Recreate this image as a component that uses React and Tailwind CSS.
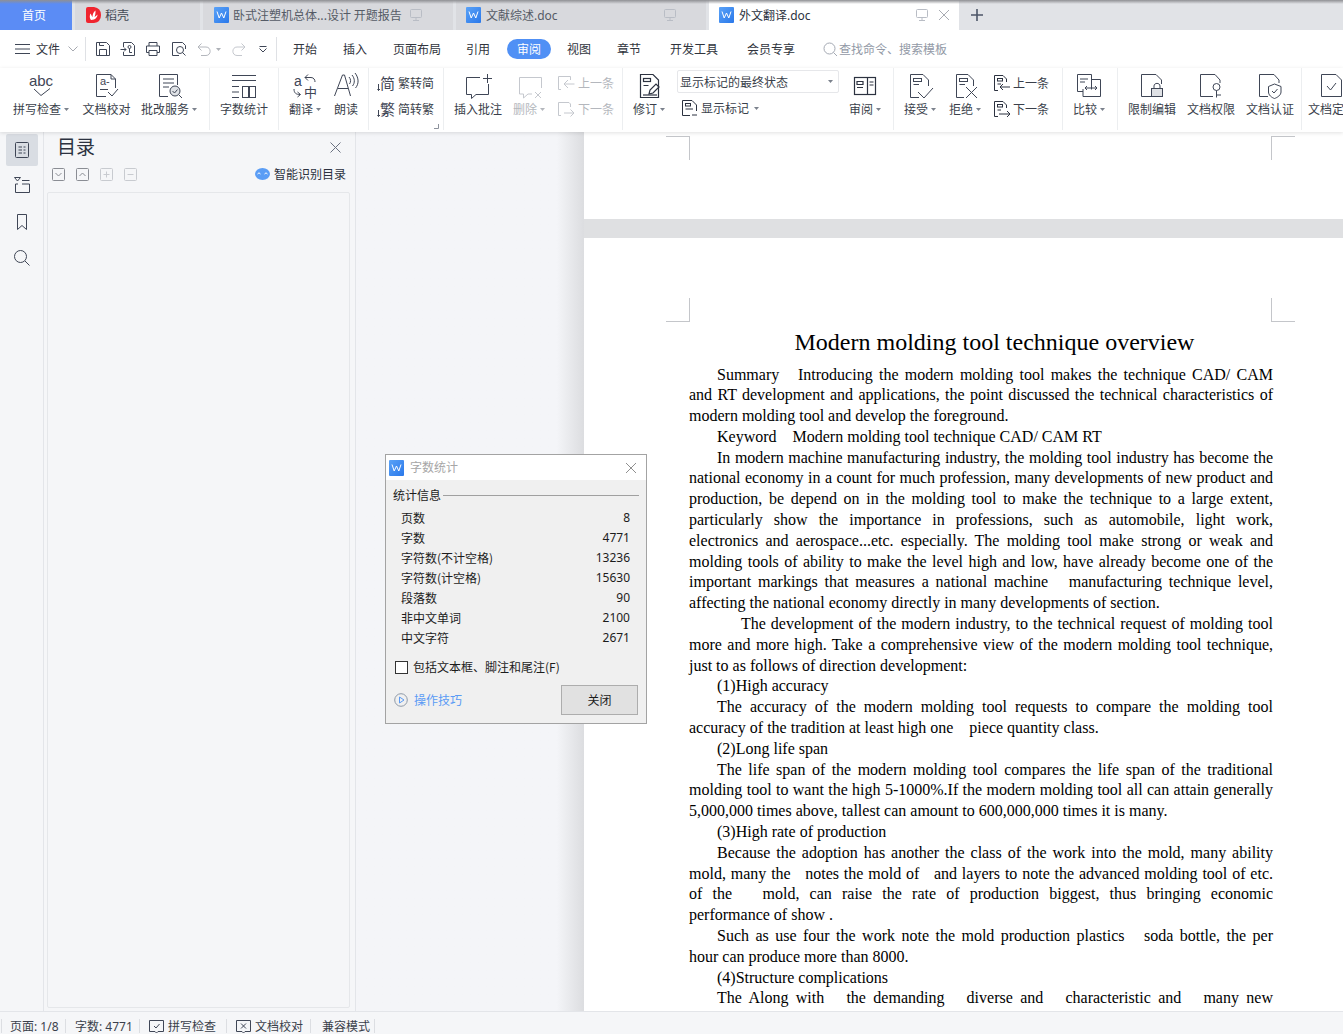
import React from "react";

const LATIN = "font-['Noto_Sans','Liberation_Sans',sans-serif]";

const S = ({ w = 28, h = 28, className = "", children, stroke = "#3f4656", sw = 1 }) => (
  <svg width={w} height={h} viewBox={`0 0 ${w} ${h}`} fill="none" stroke={stroke} strokeWidth={sw} className={"shrink-0 " + className}>
    {children}
  </svg>
);

const WIcon = () => (
  <svg width="15" height="16" viewBox="0 0 15 16" className="shrink-0">
    <defs>
      <linearGradient id="wg" x1="0" y1="0" x2="1" y2="1">
        <stop offset="0" stopColor="#5aa2f7" />
        <stop offset="1" stopColor="#2a78ea" />
      </linearGradient>
    </defs>
    <rect x="0" y="0" width="15" height="16" rx="1" fill="url(#wg)" />
    <path d="M3 4.5 L5.2 11 L7.5 6 L9.8 11 L12 4.5" fill="none" stroke="#fff" strokeWidth="1" />
  </svg>
);

const Screen = ({ c = "#b9bdc5" }) => (
  <S w={14} h={14} stroke={c}>
    <rect x="1.5" y="1.5" width="11" height="8" rx="1" />
    <path d="M7 9.5V12.5M4 12.5H10" />
  </S>
);

const Caret = ({ c = "#7b818c" }) => (
  <svg width="5" height="3" viewBox="0 0 5 3" className="shrink-0 ml-[3px]"><path d="M0 0H5L2.5 3Z" fill={c} /></svg>
);

const Tab = ({ w, active, children, icon, extra }) => (
  <div className={`${w} h-[30px] flex items-center shrink-0 ${active ? "bg-white" : "bg-[#d8d9dd]"}`}>
    {icon}
    {children}
    {extra}
  </div>
);

const G = ({ x, y, size, children, anchor = "start", family = "'Liberation Sans',sans-serif" }) => (
  <text x={x} y={y} textAnchor={anchor} fontSize={size} fontFamily={family} fill="#3f4656" stroke="none">{children}</text>
);
const CJK = "'Noto Sans CJK SC',sans-serif";

const Icons = {
  spell: (
    <S>
      <G x="14" y="14" anchor="middle" size="15">abc</G>
      <path d="M7 17L14 23.5L23 16.5" />
    </S>
  ),
  proof: (
    <S>
      <path d="M13 24.5H3.5V2.5H18L22.5 7V16" />
      <path d="M18 2.5V7H22.5" />
      <G x="7" y="13" size="11">a-</G>
      <path d="M7 17.5H15M15 20L19 24L25 17" />
    </S>
  ),
  mark: (
    <S>
      <path d="M13 24.5H4.5V2.5H22.5V13" />
      <path d="M8 7H19M8 11H19M8 15H14" />
      <circle cx="20" cy="19" r="5" fill="#dfe2e6" />
      <path d="M17.5 19L19.5 21L22.5 17.5M24 23L27 26" />
    </S>
  ),
  count: (
    <S w={30}>
      <path d="M3 3.5H27M3 8.5H27M3 14.5H10M3 20H10M3 25.5H10" />
      <rect x="13.5" y="14.5" width="6" height="11" />
      <rect x="20.5" y="14.5" width="6" height="11" />
    </S>
  ),
  trans: (
    <S>
      <G x="3" y="14" size="14">a</G>
      <path d="M14 5.5H20C23 5.5 24 8 24 10M17 2.5L14 5.5L17 8.5" />
      <path d="M3 17C3 21 5 22.5 9 22.5M6.5 20L9.5 22.5L6.5 25" />
      <G x="19.5" y="25" anchor="middle" size="13" family={CJK}>中</G>
    </S>
  ),
  read: (
    <S w={26}>
      <path d="M1.5 24L9.5 3H11.5L17.5 24M5 16.5H15" />
      <path d="M16 5C18 7 18 10 16.5 12M19 3C22 6.5 22 11 19.5 14M22 1C26 6 26 12 22.5 16" />
    </S>
  ),
  t2s: (
    <S w={18} h={18}>
      <G x="3" y="14.5" size="15" family={CJK}>简</G>
      <path d="M1.5 10V16.5M1.5 16.5L0.5 15M1.5 16.5L3 15" />
    </S>
  ),
  s2t: (
    <S w={18} h={18}>
      <G x="3" y="14.5" size="15" family={CJK}>繁</G>
      <path d="M1.5 10V16.5M1.5 16.5L0.5 15M1.5 16.5L3 15" />
    </S>
  ),
  comment: (
    <S w={32}>
      <path d="M18 5.5H4.5V22.5H9.5V26.5L14 22.5H26.5V12" />
      <path d="M25.5 2V11M21 6.5H30" />
    </S>
  ),
  del: (
    <S stroke="#c5c8ce">
      <path d="M4.5 5.5H26.5V16M4.5 5.5V22H8.5V26L13 22H17" />
      <path d="M20 20L26 26M26 20L20 26" />
    </S>
  ),
  prev: (c) => (
    <S w={20} h={18} stroke={c}>
      <path d="M11 2.5H2.5V15.5H5M11 2.5H14.5V6" />
      <path d="M18.5 10H8M12 6L8 10L12 14" />
    </S>
  ),
  next: (c) => (
    <S w={20} h={18} stroke={c}>
      <path d="M2.5 2.5H13L14.5 4V7M2.5 2.5V15.5H5" />
      <path d="M8 13H18M14.5 9.5L18 13L14.5 16.5" />
    </S>
  ),
  track: (
    <S stroke="#2c3240" sw={1.2}>
      <path d="M5.5 2.5H18L23.5 8V25.5H5.5Z" />
      <rect x="8.5" y="6.5" width="7" height="3" />
      <path d="M8.5 13.5H13.5M14 22L15 18L21 12L24 15L18 21Z" />
      <path d="M8 23H22" />
    </S>
  ),
  showMark: (
    <S w={18} h={18} stroke="#2c3240">
      <path d="M1.5 1.5H11L15.5 6V12M1.5 1.5V16.5H9" />
      <rect x="4.5" y="4.5" width="5" height="2.5" />
      <path d="M4.5 10H12M11 16H16" />
    </S>
  ),
  review: (
    <S w={24} h={24} stroke="#2c3240" sw={1.2}>
      <rect x="1.5" y="3.5" width="21" height="17" />
      <path d="M14.5 3.5V20.5M16.5 8H20.5M16.5 11H20.5M4 7.5H10V10.5H4ZM4 13.5H10" />
    </S>
  ),
  accept: (
    <S>
      <path d="M13 25.5H4.5V2.5H17L22.5 8V14" />
      <rect x="7.5" y="6.5" width="8" height="3" />
      <path d="M7.5 12.5H13M12 20L18 26L27 16" />
    </S>
  ),
  reject: (
    <S>
      <path d="M13 25.5H5.5V2.5H17L22.5 8V14" />
      <rect x="8.5" y="6.5" width="8" height="3" />
      <path d="M8.5 12.5H14M15 15L26 26M26 15L15 26" />
    </S>
  ),
  prev2: (
    <S w={18} h={18} stroke="#2c3240">
      <path d="M5 16.5H1.5V1.5H10L13.5 5V8" />
      <rect x="4.5" y="4.5" width="5" height="2.5" />
      <path d="M4.5 10H8M17 13H7M10 10L7 13L10 16" />
    </S>
  ),
  next2: (
    <S w={18} h={18} stroke="#2c3240">
      <path d="M5 16.5H1.5V1.5H10L13.5 5V8" />
      <rect x="4.5" y="4.5" width="5" height="2.5" />
      <path d="M4.5 10H8M6 14H17M14 11L17 14L14 17" />
    </S>
  ),
  compare: (
    <S w={26} h={28}>
      <path d="M15.5 17.5V2.5H1.5V19.5H7" />
      <path d="M15.5 7.5H24.5V24.5H7V17" />
      <path d="M4 7H12M4 10H9M9 16H21M11 14L9 16L11 18M19 14L21 16L19 18" />
    </S>
  ),
  lock: (
    <S>
      <path d="M13 24.5H3.5V2.5H18L23.5 8V12" />
      <rect x="13.5" y="16.5" width="11" height="8" fill="#dfe1e5" />
      <path d="M16 16.5V14C16 10.5 22 10.5 22 14V16.5" />
    </S>
  ),
  perm: (
    <S>
      <path d="M16 24.5H3.5V2.5H18L23 8V11" />
      <circle cx="19.5" cy="15" r="3.5" />
      <path d="M19.5 18.5V25.5M19.5 23H24" />
    </S>
  ),
  cert: (
    <S>
      <path d="M12 24.5H3.5V2.5H18L23 8V11" />
      <path d="M18.5 12L25 14.5V20C25 23 21.5 25.5 18.5 26.5C15.5 25.5 12.5 23 12.5 20V14.5Z" />
      <path d="M16 19L18 21L21.5 17" />
    </S>
  ),
  final: (
    <S>
      <path d="M3.5 2.5H18L23.5 8V24.5H3.5Z" />
      <path d="M9 14L12.5 18L18 11" />
    </S>
  ),
};

const Tool = ({ w, icon, label, caret, gray }) => (
  <div className={`${w} shrink-0 flex flex-col items-center pt-[4px]`}>
    <div className="h-[28px] flex items-center justify-center">{icon}</div>
    <div className={`h-[18px] flex items-center whitespace-nowrap ${gray ? "text-[#b4b7bd]" : "text-[#3a3f4b]"}`}>
      {label}
      {caret && <Caret c={gray ? "#b4b7bd" : "#7b818c"} />}
    </div>
  </div>
);

const Sep = () => <div className="w-px h-[62px] bg-[#eceef0] shrink-0" />;

const Sm = ({ icon, label, gray, gap = "gap-[3px]" }) => (
  <div className={`h-[26px] flex items-center ${gap} ${gray ? "text-[#b4b7bd]" : "text-[#3a3f4b]"}`}>
    {icon}
    <span>{label}</span>
  </div>
);

const MenuTab = ({ w, children, on }) => (
  <div className={`${w} shrink-0 flex justify-center`}>
    <span className={on ? "w-[44px] h-[20px] rounded-full bg-[#5090f5] text-white flex items-center justify-center" : "text-[#30343d]"}>{children}</span>
  </div>
);

const QBtn = ({ w, children }) => <div className={`${w} shrink-0 flex items-center justify-center`}>{children}</div>;

const lines = [
  [1, 1, "Summary \u00a0\u00a0Introducing the modern molding tool makes the technique CAD/ CAM"],
  [0, 1, "and RT development and applications, the point discussed the technical characteristics of"],
  [0, 0, "modern molding tool and develop the foreground."],
  [1, 0, "Keyword \u00a0\u00a0\u00a0Modern molding tool technique CAD/ CAM RT"],
  [1, 1, "In modern machine manufacturing industry, the molding tool industry has become the"],
  [0, 1, "national economy in a count for much profession, many developments of new product and"],
  [0, 1, "production, be depend on in the molding tool to make the technique to a large extent,"],
  [0, 1, "particularly show the importance in professions, such as automobile, light work,"],
  [0, 1, "electronics and aerospace...etc. especially. The molding tool make strong or weak and"],
  [0, 1, "molding tools of ability to make the level high and low, have already become one of the"],
  [0, 1, "important markings that measures a national machine \u00a0\u00a0manufacturing technique level,"],
  [0, 0, "affecting the national economy directly in many developments of section."],
  [2, 1, "The development of the modern industry, to the technical request of molding tool"],
  [0, 1, "more and more high. Take a comprehensive view of the modern molding tool technique,"],
  [0, 0, "just to as follows of direction development:"],
  [1, 0, "(1)High accuracy"],
  [1, 1, "The accuracy of the modern molding tool requests to compare the molding tool"],
  [0, 0, "accuracy of the tradition at least high one \u00a0\u00a0\u00a0piece quantity class."],
  [1, 0, "(2)Long life span"],
  [1, 1, "The life span of the modern molding tool compares the life span of the traditional"],
  [0, 1, "molding tool to want the high 5-1000%.If the modern molding tool all can attain generally"],
  [0, 0, "5,000,000 times above, tallest can amount to 600,000,000 times it is many."],
  [1, 0, "(3)High rate of production"],
  [1, 1, "Because the adoption has another the class of the work into the mold, many ability"],
  [0, 1, "mold, many the \u00a0\u00a0notes the mold of \u00a0\u00a0and layers to note the advanced molding tool of etc."],
  [0, 1, "of the \u00a0\u00a0mold, can raise the rate of production biggest, thus bringing economic"],
  [0, 0, "performance of show ."],
  [1, 1, "Such as use four the work note the mold production plastics \u00a0\u00a0soda bottle, the per"],
  [0, 0, "hour can produce more than 8000."],
  [1, 0, "(4)Structure complications"],
  [1, 1, "The Along with \u00a0\u00a0the demanding \u00a0\u00a0diverse and \u00a0\u00a0characteristic and \u00a0\u00a0many new"],
];

const Corner = ({ cls }) => <div className={`w-[24px] h-[24px] border-[#c4c6ca] ${cls}`} />;

const Stat = ({ k, v }) => (
  <div className="h-[20px] flex items-center justify-between pl-[8px] pr-[9px] text-[#1c1c1c]">
    <span>{k}</span>
    <span className={LATIN}>{v}</span>
  </div>
);

const Dialog = () => (
  <div className="absolute left-[385px] top-[454px] w-[262px] h-[270px] border border-[#a3a3a3] bg-[#f0f0f0] z-20 flex flex-col">
    <div className="h-[25px] bg-white flex items-center pl-[3px] pr-[9px] gap-[6px] shrink-0">
      <WIcon />
      <span className="text-[#a6a6a6] flex-1 pb-[2px]">字数统计</span>
      <S w={12} h={12} stroke="#8f8f8f"><path d="M1 1L11 11M11 1L1 11" /></S>
    </div>
    <div className="px-[7px] pt-[6px] flex-1 flex flex-col">
      <div className="flex items-center gap-[2px] h-[18px] text-[#1c1c1c]">
        <span>统计信息</span>
        <div className="flex-1 h-px bg-[#a0a0a0]" />
      </div>
      <div className="mt-[4px]">
        <Stat k="页数" v="8" />
        <Stat k="字数" v="4771" />
        <Stat k="字符数(不计空格)" v="13236" />
        <Stat k="字符数(计空格)" v="15630" />
        <Stat k="段落数" v="90" />
        <Stat k="非中文单词" v="2100" />
        <Stat k="中文字符" v="2671" />
      </div>
      <div className="mt-[9px] flex items-center h-[20px] pl-[2px] gap-[5px] text-[#1c1c1c]">
        <div className="w-[13px] h-[13px] border border-[#333] bg-white" />
        <span>包括文本框、脚注和尾注(F)</span>
      </div>
      <div className="mt-[8px] flex items-center justify-between pl-[1px] pr-[1px]">
        <div className="flex items-center gap-[6px] text-[#5a9bf5]">
          <S w={14} h={14} stroke="#8f9aa8">
            <circle cx="7" cy="7" r="6.3" />
            <path d="M5.5 4V10L10 7Z" stroke="#5a9bf5" />
          </S>
          <span>操作技巧</span>
        </div>
        <div className="w-[77px] h-[30px] border border-[#adadad] bg-[#e1e1e1] flex items-center justify-center text-[#1c1c1c]">关闭</div>
      </div>
    </div>
  </div>
);

const MiniBtn = ({ c, children }) => (
  <svg width="13" height="13" viewBox="0 0 13 13" fill="none" stroke={c} className="shrink-0">
    <rect x="0.5" y="0.5" width="12" height="12" rx="1" />
    {children}
  </svg>
);

const StatusSep = () => <div className="w-px h-[14px] bg-[#dcdee2] shrink-0" />;

export default function App() {
  return (
    <div className="relative w-[1343px] h-[1034px] overflow-hidden bg-white flex flex-col text-[12px] leading-none font-['Noto_Sans_CJK_SC','Liberation_Sans',sans-serif]">
      {/* tab bar */}
      <div className="relative h-[30px] shrink-0 flex bg-[#e1e3e7] gap-[3px]">
        <div className="w-[72px] h-[30px] bg-[#5b8cf5] text-white flex items-center justify-center shrink-0 pr-[4px]">首页</div>
        <Tab w="w-[125px]" icon={<span className="ml-[11px] mr-[4px] flex"><svg width="15" height="16" viewBox="0 0 15 16"><path d="M0 2Q0 0 2 0H8Q15 1 15 8T8 16H2Q0 16 0 14Z" fill="#f0252f" /><path d="M5 13C3 10 4 8 4.5 6.5C5.5 8 5.5 9 6.5 10C6.5 7 7.5 5 9.5 3.5C9.5 6 9.5 7.5 8.5 10C9.5 9.5 10.5 8.5 11.5 7.5C11.5 10 9.5 13 5 13Z" fill="#fff" /></svg></span>}>
          <span className="text-[#444a55]">稻壳</span>
        </Tab>
        <Tab w="w-[250px]" icon={<span className="ml-[11px] mr-[4px] flex"><WIcon /></span>} extra={<span className="ml-[7px] flex"><Screen /></span>}>
          <span className="text-[#555b66] whitespace-nowrap">卧式注塑机总体...设计 开题报告</span>
        </Tab>
        <Tab w="w-[250px]" icon={<span className="ml-[10px] mr-[5px] flex"><WIcon /></span>} extra={<span className="ml-auto mr-[29px] flex"><Screen /></span>}>
          <span className="text-[#555b66] whitespace-nowrap">文献综述<span className={LATIN}>.doc</span></span>
        </Tab>
        <Tab w="w-[250px]" active icon={<span className="ml-[10px] mr-[5px] flex"><WIcon /></span>} extra={<span className="ml-auto mr-[9px] flex items-center gap-[9px]"><Screen /><S w={12} h={12} stroke="#a8abb2"><path d="M1 1L11 11M11 1L1 11" /></S></span>}>
          <span className="text-[#2c3240] whitespace-nowrap">外文翻译<span className={LATIN}>.doc</span></span>
        </Tab>
        <div className="ml-[8px] flex items-center">
          <S w={14} h={14} stroke="#4c5568" sw={1.6}><path d="M7 1V13M1 7H13" /></S>
        </div>
        <div className="absolute left-0 right-0 top-0 h-[4px] bg-gradient-to-b from-[#8f9094] to-transparent pointer-events-none" />
      </div>

      {/* menu row */}
      <div className="h-[38px] shrink-0 flex items-center bg-white">
        <div className="w-[15px] shrink-0" />
        <S w={15} h={12}><path d="M0 1.5H15M0 6H15M0 10.5H15" /></S>
        <span className="ml-[6px] text-[#30343d]">文件</span>
        <S w={10} h={6} stroke="#a6a9b0" className="ml-[8px]"><path d="M0.5 0.5L5 5L9.5 0.5" /></S>
        <div className="w-[7px] shrink-0" />
        <div className="w-px h-[24px] bg-[#dfe1e5] shrink-0" />
        <div className="flex items-center ml-[4px]">
          <QBtn w="w-[25px]"><S w={16} h={16}><path d="M1.5 1.5H11.5L14.5 4.5V14.5H1.5ZM4.5 14.5V8.5H11.5V14.5M4.5 1.5V4.5H9" /></S></QBtn>
          <QBtn w="w-[25px]"><S w={16} h={16}><path d="M3.5 6V1.5H11.5L14.5 4.5V14.5H3.5V11M0.5 8.5H6M4 6.5L6 8.5L4 10.5" /><circle cx="9.5" cy="6" r="1.5" /><path d="M9.5 7.5V11.5H12" /></S></QBtn>
          <QBtn w="w-[26px]"><S w={16} h={16}><path d="M4 5V1.5H12V5M4 11.5H1.5V5H14.5V11.5H12M4 9.5H12V14.5H4Z" /></S></QBtn>
          <QBtn w="w-[26px]"><S w={16} h={16}><path d="M8 14.5H1.5V1.5H11.5L14.5 4.5V8" /><circle cx="9" cy="9" r="3.5" /><path d="M11.5 11.5L14.5 14.5" /></S></QBtn>
          <QBtn w="w-[24px]"><S w={15} h={15} stroke="#b4b7bd"><path d="M4.5 1.5L1 5L4.5 8.5M1 5H9C14.5 5 14.5 13.5 9 13.5H4" /></S></QBtn>
          <span className="-ml-[3px] flex"><Caret c="#aeb1b7" /></span>
          <div className="w-[9px]" />
          <QBtn w="w-[16px]"><S w={15} h={15} stroke="#c5c8ce"><path d="M10.5 1.5L14 5L10.5 8.5M14 5H6C0.5 5 0.5 13.5 6 13.5H11" /></S></QBtn>
          <div className="w-[5px]" />
          <QBtn w="w-[24px]"><S w={8} h={8}><path d="M0.5 1.5H7.5M0.5 3.5L4 7L7.5 3.5" /></S></QBtn>
        </div>
        <div className="w-px h-[24px] bg-[#dfe1e5] shrink-0 ml-[1px]" />
        <MenuTab w="w-[56px]">开始</MenuTab>
        <MenuTab w="w-[44px]">插入</MenuTab>
        <MenuTab w="w-[80px]">页面布局</MenuTab>
        <MenuTab w="w-[42px]">引用</MenuTab>
        <MenuTab w="w-[60px]" on>审阅</MenuTab>
        <MenuTab w="w-[40px]">视图</MenuTab>
        <MenuTab w="w-[60px]">章节</MenuTab>
        <MenuTab w="w-[70px]">开发工具</MenuTab>
        <MenuTab w="w-[84px]">会员专享</MenuTab>
        <div className="ml-[10px] flex items-center gap-[1px] text-[#9299a6] whitespace-nowrap">
          <S w={15} h={15} stroke="#a4a9b3"><circle cx="6.5" cy="6.5" r="5.5" /><path d="M10.5 10.5L14 14" /></S>
          <span>查找命令、搜索模板</span>
        </div>
      </div>

      {/* ribbon */}
      <div className="relative z-10 h-[64px] shrink-0 flex items-start bg-white overflow-hidden shadow-[0_1px_4px_rgba(0,0,0,0.12)]">
        <div className="w-[9px] shrink-0" />
        <Tool w="w-[64px]" icon={Icons.spell} label="拼写检查" caret />
        <Tool w="w-[67px]" icon={Icons.proof} label="文档校对" />
        <Tool w="w-[58px]" icon={Icons.mark} label="批改服务" caret />
        <div className="w-[11px] shrink-0" />
        <Sep />
        <Tool w="w-[68px]" icon={Icons.count} label="字数统计" />
        <Sep />
        <Tool w="w-[52px]" icon={Icons.trans} label="翻译" caret />
        <Tool w="w-[30px]" icon={Icons.read} label="朗读" />
        <div className="w-[7px] shrink-0" />
        <Sep />
        <div className="relative w-[74px] shrink-0 pl-[8px] pt-[2px]">
          <Sm icon={Icons.t2s} label="繁转简" />
          <Sm icon={Icons.s2t} label="简转繁" />
          <svg width="5" height="5" className="absolute right-[4px] top-[56px]"><path d="M4.5 0V4.5H0" fill="none" stroke="#8d929c" /></svg>
        </div>
        <Sep />
        <Tool w="w-[68px]" icon={Icons.comment} label="插入批注" />
        <Tool w="w-[34px]" icon={Icons.del} label="删除" caret gray />
        <div className="w-[76px] shrink-0 pl-[10px] pt-[2px]">
          <Sm icon={Icons.prev("#c5c8ce")} label="上一条" gray gap="gap-[2px]" />
          <Sm icon={Icons.next("#c5c8ce")} label="下一条" gray gap="gap-[2px]" />
        </div>
        <Sep />
        <Tool w="w-[52px]" icon={Icons.track} label="修订" caret />
        <div className="w-[164px] shrink-0 pl-[2px] pt-[2px]">
          <div className="w-[162px] h-[23px] border border-[#e6e7ea] rounded-[2px] flex items-center justify-between pl-[2px] pr-[5px] text-[#3a3f4b]">
            <span>显示标记的最终状态</span>
            <Caret />
          </div>
          <div className="mt-[6px] h-[18px] flex items-center gap-[2px] pl-[4px] text-[#3a3f4b]">
            {Icons.showMark}
            <span>显示标记</span>
            <Caret />
          </div>
        </div>
        <Tool w="w-[52px]" icon={Icons.review} label="审阅" caret />
        <div className="w-[2px] shrink-0" />
        <Sep />
        <Tool w="w-[52px]" icon={Icons.accept} label="接受" caret />
        <Tool w="w-[38px]" icon={Icons.reject} label="拒绝" caret />
        <div className="w-[78px] shrink-0 pl-[9px] pt-[2px]">
          <Sm icon={Icons.prev2} label="上一条" gap="gap-[2px]" />
          <Sm icon={Icons.next2} label="下一条" gap="gap-[2px]" />
        </div>
        <Sep />
        <Tool w="w-[52px]" icon={Icons.compare} label="比较" caret />
        <div className="w-[2px] shrink-0" />
        <Sep />
        <div className="w-[4px] shrink-0" />
        <Tool w="w-[60px]" icon={Icons.lock} label="限制编辑" />
        <Tool w="w-[58px]" icon={Icons.perm} label="文档权限" />
        <Tool w="w-[60px]" icon={Icons.cert} label="文档认证" />
        <div className="w-px shrink-0" />
        <Sep />
        <div className="w-[6px] shrink-0" />
        <Tool w="w-[48px]" icon={Icons.final} label="文档定稿" />
      </div>

      {/* main */}
      <div className="relative flex-1 min-h-0 flex overflow-hidden">
        <div className="w-[44px] shrink-0 bg-[#f5f6f8] border-r border-[#e3e5e9] flex flex-col items-center pt-[2px]">
          <div className="w-[32px] h-[32px] rounded-[2px] bg-[#d9dde3] flex items-center justify-center ml-[1px]">
            <S w={16} h={16}><rect x="1.5" y="0.5" width="13" height="15" rx="1" /><path d="M4.5 5H8M9.5 5H11.5M4.5 8H8M9.5 8H11.5M4.5 11H8M9.5 11H11.5" /></S>
          </div>
          <div className="mt-[10px] h-[18px] flex items-center"><S w={18} h={18}><path d="M1.5 1.5H7.5L4.5 5ZM9 4.5H16.5M9 8H16.5V16.5H2.5V8H5" /></S></div>
          <div className="mt-[19px] h-[18px] flex items-center"><S w={14} h={18}><path d="M2.5 1.5H11.5V16.5L7 12.5L2.5 16.5Z" /></S></div>
          <div className="mt-[18px] h-[18px] flex items-center"><S w={18} h={18}><circle cx="7.5" cy="7.5" r="6" /><path d="M12 12L16.5 16.5" /></S></div>
        </div>

        <div className="w-[312px] shrink-0 bg-[#f5f6f8] border-r border-[#e3e5e9] flex flex-col pb-[3px]">
          <div className="h-[30px] shrink-0 flex items-center justify-between pl-[13px] pr-[14px]">
            <span className="text-[19px] text-[#2c3240] pb-[4px]">目录</span>
            <S w={11} h={11} stroke="#6a7180"><path d="M0.5 0.5L10.5 10.5M10.5 0.5L0.5 10.5" /></S>
          </div>
          <div className="h-[24px] shrink-0 flex items-center pl-[8px] pr-[9px]">
            <div className="flex items-center gap-[11px]">
              <MiniBtn c="#8a8d94"><path d="M3.5 5L6.5 8L9.5 5" /></MiniBtn>
              <MiniBtn c="#8a8d94"><path d="M3.5 8L6.5 5L9.5 8" /></MiniBtn>
              <MiniBtn c="#c8cbd0"><path d="M3.5 6.5H9.5M6.5 3.5V9.5" /></MiniBtn>
              <MiniBtn c="#c8cbd0"><path d="M3.5 6.5H9.5" /></MiniBtn>
            </div>
            <div className="ml-auto flex items-center gap-[4px] text-[#2c3240]">
              <svg width="15" height="12" viewBox="0 0 15 12"><ellipse cx="7.5" cy="6" rx="7.5" ry="6" fill="#5a9df5" /><path d="M2.5 6L4 4.8L5.5 6M9.5 6L11 4.8L12.5 6" fill="none" stroke="#fff" /></svg>
              <span>智能识别目录</span>
            </div>
          </div>
          <div className="flex-1 ml-[3px] mr-[5px] mt-[6px] border border-[#e5e7ea] rounded-[2px]" />
        </div>

        <div className="w-[228px] shrink-0 bg-gradient-to-r from-[#f4f5f8] from-[88%] to-[#dcdde0]" />

        <div className="flex-1 min-w-0 bg-[#dfe0e2] flex flex-col">
          {/* first page */}
          <div className="h-[87px] shrink-0 bg-white relative">
            <div className="flex justify-between pl-[82px] pr-[48px] pt-[4px]">
              <Corner cls="border-t border-r" />
              <Corner cls="border-t border-l" />
            </div>
          </div>
          <div className="h-[19px] shrink-0" />
          {/* second page */}
          <div className="flex-1 bg-white overflow-hidden pt-[60px]">
            <div className="flex justify-between pl-[82px] pr-[48px]">
              <Corner cls="border-b border-r" />
              <Corner cls="border-b border-l" />
            </div>
            <div className="pl-[105px] pr-[70px] text-[#000] font-['Liberation_Serif',serif]">
              <div className="h-[27px] mt-[7px] pl-[27px] text-[24px] leading-[27px] text-center whitespace-nowrap">Modern molding tool technique overview</div>
              <div className="mt-[8.5px]">
                {lines.map(([ind, just, t], i) => (
                  <div key={i} className={`h-[20.8px] text-[16px] leading-[20.8px] whitespace-nowrap ${just ? "text-justify [text-align-last:justify]" : ""} ${ind === 1 ? "pl-[28px]" : ind === 2 ? "pl-[52px]" : ""}`}>{t}</div>
                ))}
              </div>
            </div>
          </div>
        </div>
      </div>

      {/* status bar */}
      <div className="relative h-[23px] shrink-0 bg-[#f5f6f8] border-t border-[#e3e5e9] flex items-center pt-[6px] text-[#3a3f4b] whitespace-nowrap">
        <div className="w-[1px]" />
        <StatusSep />
        <span className="ml-[8px] w-[50px]">页面<span className={LATIN}>: 1/8</span></span>
        <div className="w-[5px]" />
        <StatusSep />
        <span className="ml-[9px] w-[58px]">字数<span className={LATIN}>: 4771</span></span>
        <div className="w-[6px]" />
        <StatusSep />
        <span className="ml-[9px] flex items-center gap-[4px]"><S w={15} h={15}><path d="M0.5 1.5H14.5V12.5H9L7.5 14L6 12.5H0.5Z" /><path d="M5 7L7 9L10.5 5" /></S>拼写检查</span>
        <div className="w-[10px]" />
        <StatusSep />
        <span className="ml-[9px] flex items-center gap-[4px]"><S w={15} h={15}><path d="M0.5 1.5H14.5V12.5H9L7.5 14L6 12.5H0.5Z" /><path d="M5 4.5L10 9.5M10 4.5L5 9.5" /></S>文档校对</span>
        <div className="w-[7px]" />
        <StatusSep />
        <span className="ml-[11px]">兼容模式</span>
        <div className="w-[4px]" />
        <StatusSep />
      </div>

      <Dialog />
    </div>
  );
}
